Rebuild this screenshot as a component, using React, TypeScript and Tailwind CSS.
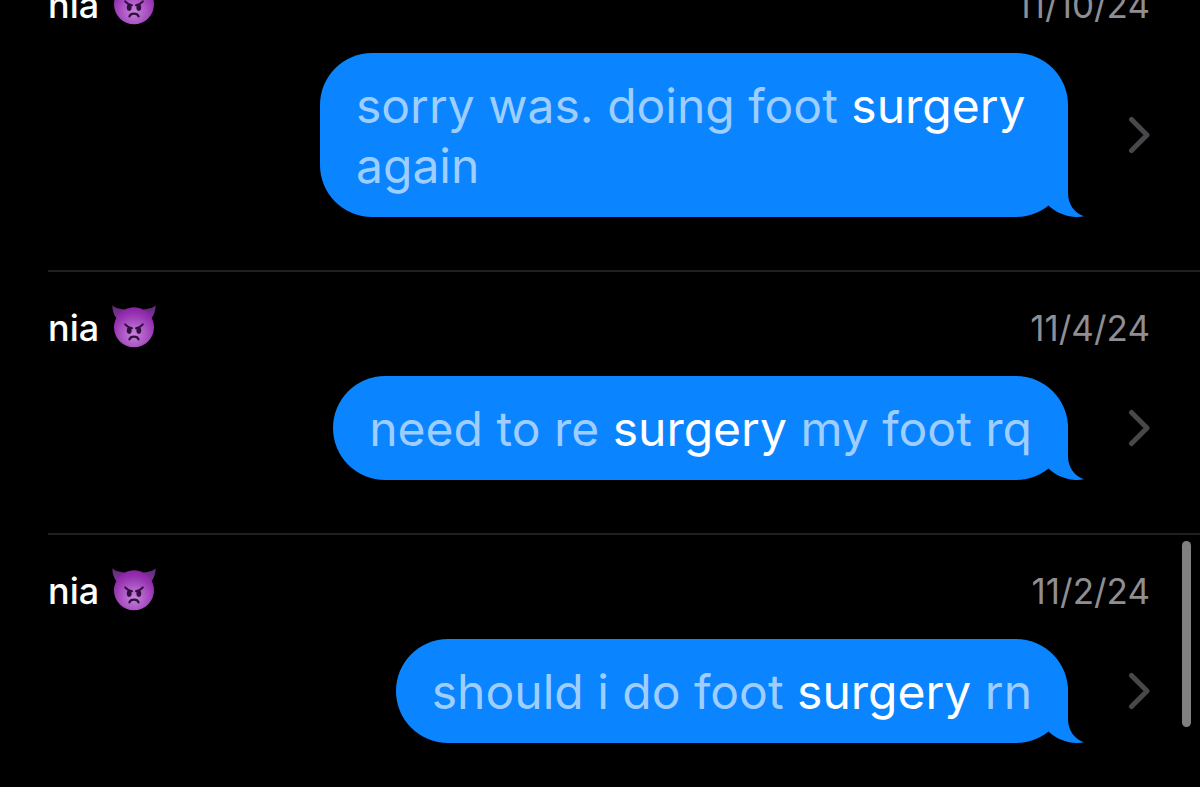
import React from "react";

type Result = {
  date: string;
  before: string;
  match: string;
  after: string;
};

const results: Result[] = [
  { date: "11/10/24", before: "sorry was. doing foot ", match: "surgery", after: " again" },
  { date: "11/4/24", before: "need to re ", match: "surgery", after: " my foot rq" },
  { date: "11/2/24", before: "should i do foot ", match: "surgery", after: " rn" },
];

function ImpEmoji() {
  return (
    <svg viewBox="0 0 44 44" className="mb-1 size-11 shrink-0" role="img" aria-label="angry face with horns">
      <defs>
        <radialGradient id="imp-face" cx="50%" cy="68%" r="68%">
          <stop offset="0" stopColor="#c583d6" />
          <stop offset="0.4" stopColor="#ae5ac6" />
          <stop offset="0.75" stopColor="#9734b2" />
          <stop offset="1" stopColor="#8a22a6" />
        </radialGradient>
        <linearGradient id="imp-horn" x1="0" y1="0" x2="0" y2="1">
          <stop offset="0" stopColor="#5f2878" />
          <stop offset="1" stopColor="#83369c" />
        </linearGradient>
      </defs>
      <path d="M0.500 1.300C3 4.500 7.500 4.200 13 6L5 15C2.600 12 0 6.500 0.500 1.300Z" fill="url(#imp-horn)" />
      <path d="M43.500 1.300C41 4.500 36.500 4.200 31 6L39 15C41.400 12 44 6.500 43.500 1.300Z" fill="url(#imp-horn)" />
      <circle cx="22" cy="23.300" r="20" fill="url(#imp-face)" />
      <g fill="none" stroke="#320d42" strokeLinecap="round">
        <path d="M13.200 20.400C14.800 22.400 17 23.800 20 24.200" strokeWidth="2" />
        <path d="M30.800 20.400C29.200 22.400 27 23.800 24 24.200" strokeWidth="2" />
        <path d="M17.400 35.400C18.800 31.800 25.200 31.800 26.600 35.400" strokeWidth="2.200" />
      </g>
      <ellipse cx="17.200" cy="26.600" rx="2.400" ry="3.300" fill="#320d42" />
      <ellipse cx="26.800" cy="26.600" rx="2.400" ry="3.300" fill="#320d42" />
    </svg>
  );
}

function BubbleTail() {
  return (
    <svg viewBox="0 0 36 56" className="absolute -right-4 bottom-0 h-14 w-9" aria-hidden="true">
      <path
        d="M20 0V32C20 43 26 52 36 55.200C33 55.900 30 56.100 27 55.900C16 55.200 7 51 0.500 44.600L8 0Z"
        fill="#0a84ff"
      />
    </svg>
  );
}

function Chevron() {
  return (
    <svg viewBox="0 0 22 38" className="h-[38px] w-[22px] shrink-0" aria-hidden="true">
      <path d="M3.500 3.500L19 19L3.500 34.500" fill="none" stroke="#48484a" strokeWidth="5" strokeLinecap="round" strokeLinejoin="round" />
    </svg>
  );
}

function ResultRow({ date, before, match, after }: Result) {
  return (
    <li className="ml-12 border-b-2 border-[#1f1f21]">
      <a href="#conversation" className="block pt-8 pr-[50px] pb-[53px]">
        <div className="flex h-12 items-center justify-between">
          <span className="flex items-center gap-[13px] text-[36px] leading-12 font-medium text-white">
            nia
            <ImpEmoji />
          </span>
          <time className="text-[35px] leading-12 text-[#8e8e93]">{date}</time>
        </div>
        <div className="mt-6 flex items-center justify-end gap-[60px]">
          <p className="relative max-w-[748px] rounded-[52px] bg-[#0a84ff] px-9 pt-[23px] pb-[21px] text-[48px] leading-[60px] text-[#9dceff]">
            {before}
            <mark className="bg-transparent text-white">{match}</mark>
            {after}
            <BubbleTail />
          </p>
          <Chevron />
        </div>
      </a>
    </li>
  );
}

export default function App() {
  return (
    <main className="relative h-screen overflow-hidden bg-black font-['Inter',sans-serif]">
      <ul className="-mt-[51px]">
        {results.map((result) => (
          <ResultRow key={result.date} {...result} />
        ))}
      </ul>
      <div className="absolute top-[541px] right-[9px] h-[186px] w-[9px] rounded-full bg-[#808080]" />
    </main>
  );
}
